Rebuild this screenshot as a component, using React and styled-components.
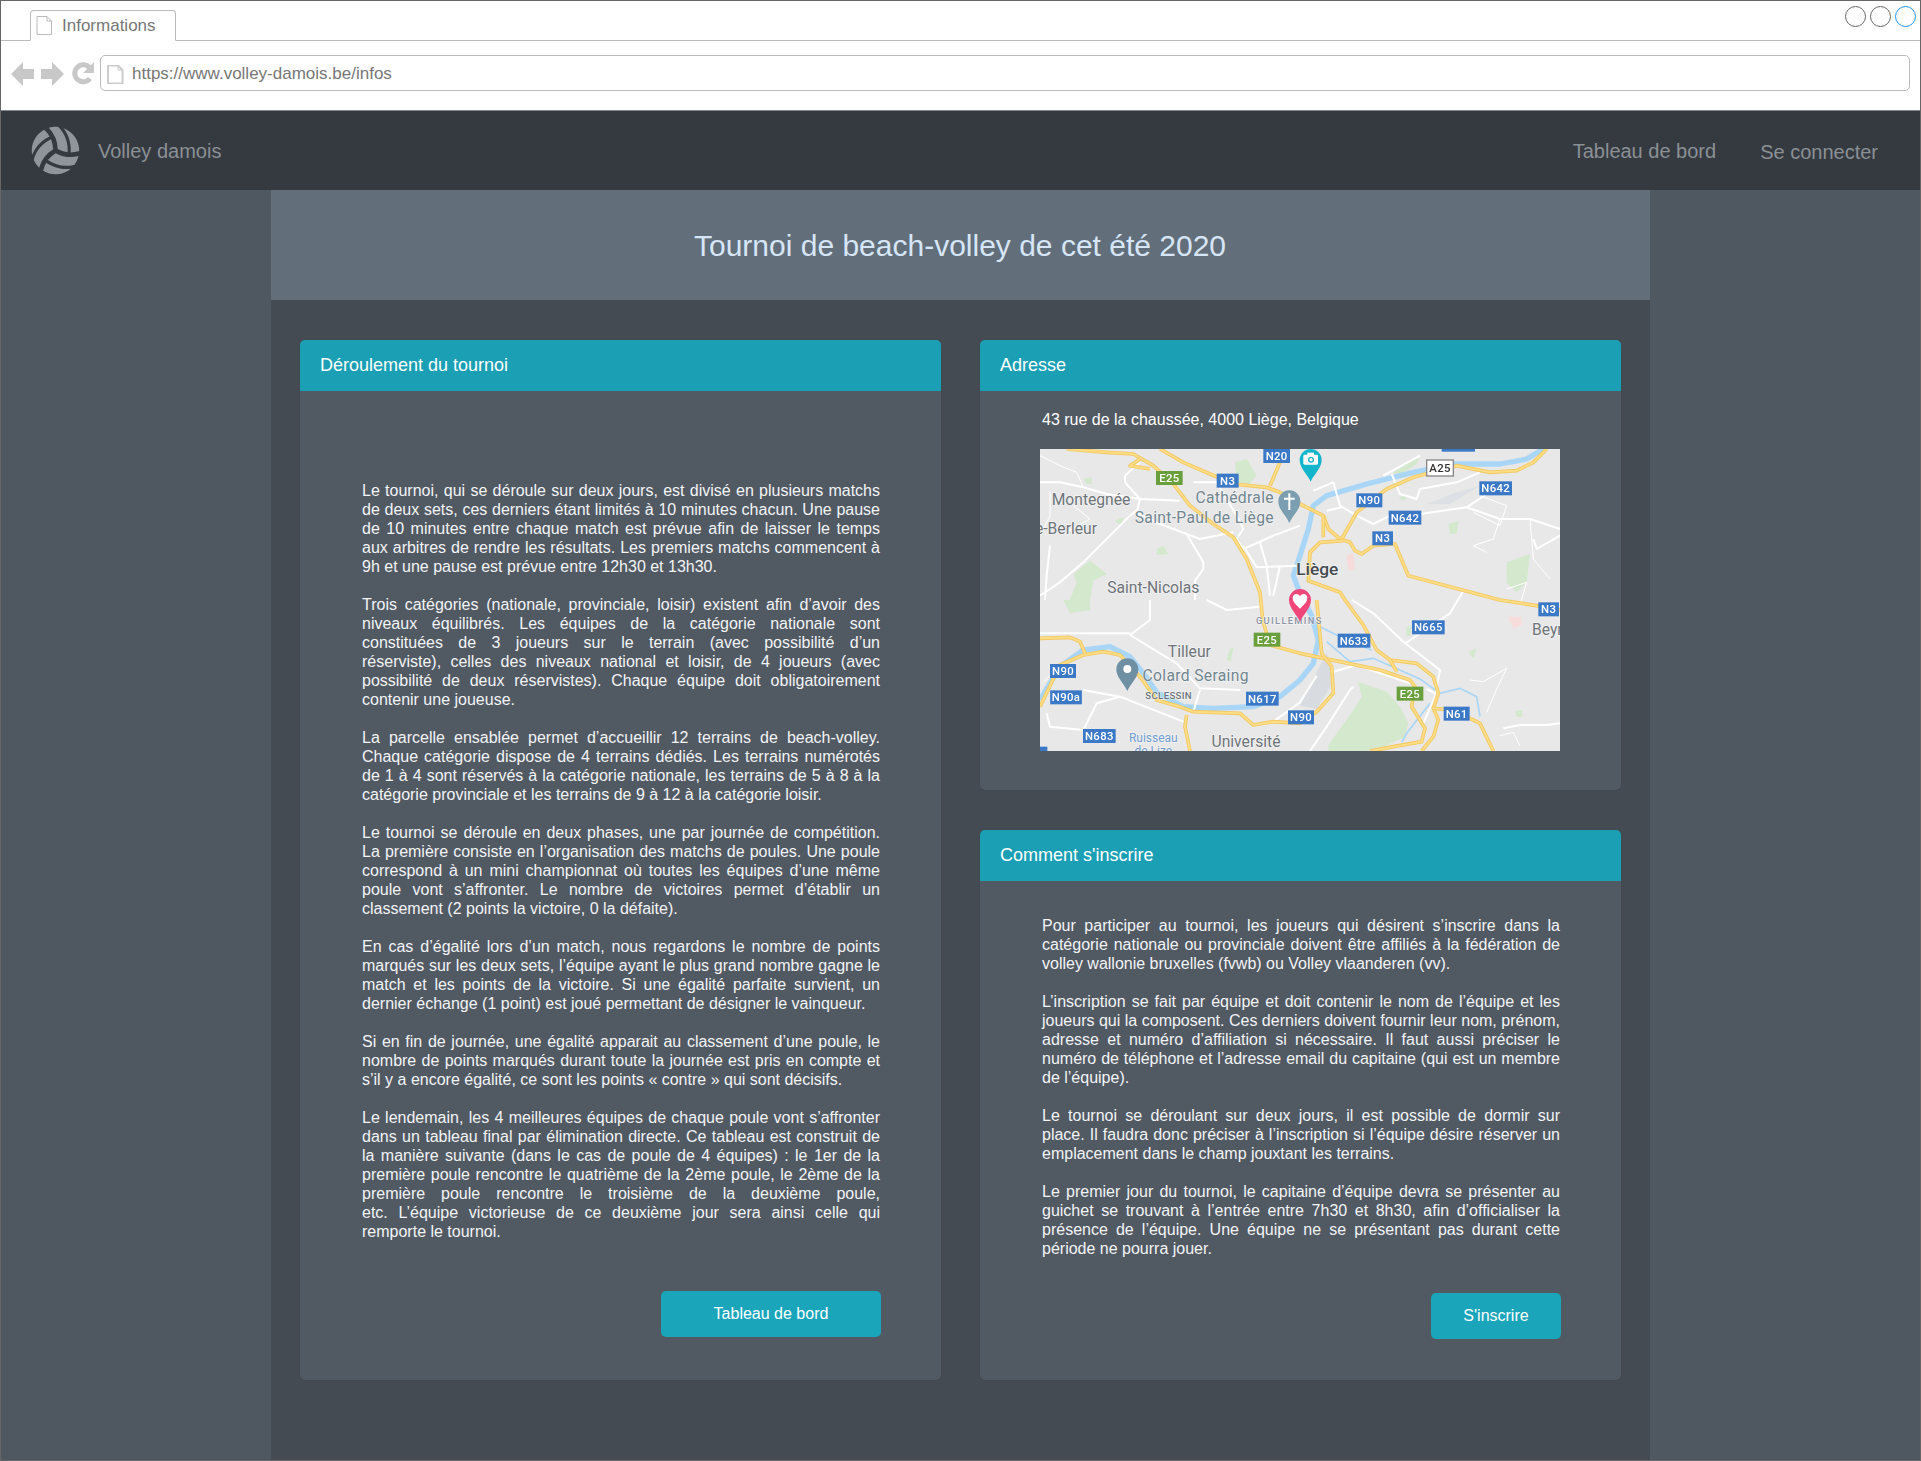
import styled, { createGlobalStyle } from "styled-components"
import { FaVolleyballBall } from "react-icons/fa"

const GlobalStyle = createGlobalStyle`
    * { box-sizing: border-box; }
    body {
        margin: 0;
        font-family: "Liberation Sans", Arial, sans-serif;
        background: #4f5761;
    }
`

const Frame = styled.div`
    width: 1921px;
    height: 1461px;
    border: 1px solid #666;
    overflow: hidden;
    display: flex;
    flex-direction: column;
`

const BrowserBar = styled.header`
    height: 110px;
    background: #fff;
    border-bottom: 1px solid #888;
    display: flex;
    flex-direction: column;
`

const TabRow = styled.div`
    height: 40px;
    border-bottom: 1px solid #bbb;
    padding: 9px 4px 0 29px;
    display: flex;
    justify-content: space-between;
`

const Tab = styled.div`
    width: 146px;
    height: 31px;
    border: 1px solid #bbb;
    border-bottom: 1px solid #fff;
    border-radius: 4px 4px 0 0;
    background: #fff;
    padding-left: 4px;
    display: flex;
    align-items: center;
    gap: 9px;
    color: #777;
    font-size: 17px;
`

const WindowDots = styled.div`
    display: flex;
    gap: 4px;
    margin-top: -4px;
`

const Dot = styled.span`
    width: 21px;
    height: 21px;
    border-radius: 50%;
    border: 1px solid ${(p) => p.$color};
`

const AddressRow = styled.div`
    flex: 1;
    padding: 14px 10px 0 10px;
    display: flex;
    align-items: flex-start;
    gap: 6px;
`

const NavIcons = styled.div`
    display: flex;
    gap: 7px;
    margin-top: 6px;
`

const AddressBox = styled.div`
    flex: 1;
    height: 36px;
    border: 1px solid #bbb;
    border-radius: 5px;
    padding: 2px 0 0 5px;
    display: flex;
    align-items: center;
    gap: 8px;
    color: #777;
    font-size: 17px;
`

const NavBar = styled.nav`
    height: 79px;
    background: #343a40;
    padding: 0 42px 0 30px;
    display: flex;
    align-items: center;
    color: #8b9095;
    font-size: 20px;
`

const Brand = styled.div`
    display: flex;
    align-items: center;
    gap: 18px;
    flex: 1;
    svg { color: #8f959a; }
`

const NavLinks = styled.div`
    display: flex;
    gap: 44px;
`

const NavText = styled.span`
    padding-top: ${(p) => p.$drop}px;
`

const Page = styled.main`
    flex: 1;
    width: 1379px;
    margin-left: 270px;
    background: #444b53;
`

const Banner = styled.div`
    height: 110px;
    padding-top: 2px;
    background: #636e7b;
    display: flex;
    align-items: center;
    justify-content: center;
`

const Title = styled.h1`
    margin: 0 1px 0 0;
    font-size: 30px;
    font-weight: 400;
    color: #d6e6f6;
`

const Columns = styled.div`
    display: grid;
    grid-template-columns: 641px 641px;
    column-gap: 39px;
    padding: 40px 28px 0 29px;
`

const Stack = styled.div`
    display: flex;
    flex-direction: column;
    gap: 40px;
`

const Card = styled.section`
    height: ${(p) => p.$height}px;
    background: #515963;
    border-radius: 5px;
    box-shadow: 0 0 1px #3c4249;
    display: flex;
    flex-direction: column;
`

const CardHeader = styled.h2`
    margin: 0;
    height: 51px;
    padding-left: 20px;
    background: #1a9fb4;
    border-radius: 5px 5px 0 0;
    display: flex;
    align-items: center;
    color: #fff;
    font-size: 18px;
    font-weight: 400;
`

const CardBody = styled.div`
    flex: 1;
    padding: ${(p) => p.$top}px 61px 0 62px;
    color: #f2f4f6;
    font-size: 16px;
    line-height: 19px;
    display: flex;
    flex-direction: column;
`

const Paragraph = styled.p`
    margin: 0 0 19px;
    text-align: justify;
`

const AddressText = styled.p`
    margin: 0 0 20px;
    color: #fff;
`

const ButtonRow = styled.div`
    display: flex;
    justify-content: flex-end;
    margin: ${(p) => p.$top}px -1px 0 0;
`

const ActionButton = styled.button`
    width: ${(p) => p.$width}px;
    height: 46px;
    border: none;
    border-radius: 5px;
    background: #1aa5ba;
    color: #fff;
    font-family: inherit;
    font-size: 16px;
`

const MapFrame = styled.svg`
    display: block;
    width: 520px;
    height: 302px;
    margin-left: -2px;
    background: #e8e8e8;
`

const MapArt = styled.g`
    filter: blur(0.35px);
`

const MapLabel = styled.text`
    font-family: Roboto, "Liberation Sans", sans-serif;
    font-size: ${(p) => p.$size || 47}px;
    font-weight: ${(p) => p.$weight || 400};
    letter-spacing: ${(p) => p.$spacing || 0}px;
    fill: ${(p) => p.$color || "#6d7378"};
    text-anchor: middle;
    paint-order: stroke;
    stroke: rgba(255, 255, 255, 0.55);
    stroke-width: 4px;
`

const BadgeLabel = styled.text`
    font-family: Roboto, "Liberation Sans", sans-serif;
    font-size: 34px;
    font-weight: 500;
    letter-spacing: 1px;
    fill: ${(p) => (p.$light ? "#333" : "#fff")};
    text-anchor: middle;
`

const PageIcon = ({ stroke, fill, strokeWidth = 1 }) => (
    <svg width="18" height="19" viewBox="0 0 18 19">
        <path d="M2 .5H12L16.5 5V18.5H2Z" fill={fill} stroke={stroke} strokeWidth={strokeWidth} />
        <path d="M12 .5V5H16.5" fill="none" stroke={stroke} />
    </svg>
)

const BrowserArrows = () => (
    <svg width="54" height="26" viewBox="0 0 54 26" fill="#c8c8c8">
        <path d="M0 13 12 1V8H23V18H12V25Z" />
        <path d="M53 13 41 1V8H30V18H41V25Z" />
    </svg>
)

const ReloadIcon = () => (
    <svg width="22" height="24" viewBox="0 0 22 24">
        <path d="M17.5 6.5A8.5 8.5 0 1 0 18 17.5" fill="none" stroke="#c8c8c8" strokeWidth="5" />
        <path d="M22 1V12H11Z" fill="#c8c8c8" />
    </svg>
)

// all map coordinates are in 3x pixels of the 520x302 map
const yellowRoads = [
    "M80 0 200 10 280 15 340 50 400 105 450 170 520 225 580 265 620 330 660 430 668 513 690 588 780 613 900 638 1020 663 1110 693 1125 713 1115 773 1155 838 1145 878 1060 893 990 906",
    "M360 0 430 40 510 75 580 105 680 115 720 130 780 165 850 200 865 240 900 270 930 280 945 305 965 315 1000 290 1065 285 1105 380 1380 453 1510 473 1560 483",
    "M720 40 690 110",
    "M905 270 950 190 1040 120 1120 85 1250 50 1350 70 1430 65 1480 40 1520 0",
    "M910 275 840 280 810 310 805 395 900 430 915 453 970 528 1010 603 1050 633 1130 643 1180 683 1195 733 1180 778 1195 813 1180 863 1145 906",
    "M1180 778 1240 783 1320 823 1360 906",
    "M1050 633 1070 668",
    "M830 453 845 613 875 653 880 733 830 788 780 823 700 818 640 828 600 793 460 788 420 773 350 753 300 683 240 618 190 608 130 618 60 648 0 773",
    "M0 568 90 565 120 578 135 613",
    "M440 798 435 833 450 906",
    "M850 200 850 265",
    "M300 30 270 50 330 60",
]

const whiteRoads = [
    "M0 100 60 100 130 115 200 135 300 150 420 155",
    "M300 40 255 80 255 100 300 150 290 190 360 225 440 255 480 270 580 250",
    "M130 340 180 290 270 200 290 185",
    "M130 340 60 400 0 440",
    "M30 290 20 380 15 453",
    "M440 255 490 340 490 360 465 395 465 453",
    "M460 100 530 100 590 200 610 240 590 270 610 300 700 260 780 230",
    "M610 290 650 355 770 350",
    "M660 280 680 350 690 440",
    "M820 125 880 100 900 170 950 200 1000 225 1050 200",
    "M860 185 905 175",
    "M1055 75 1080 135 1130 150 1140 120 1250 100 1320 70",
    "M1030 80 1140 20",
    "M1140 195 1280 175 1340 135",
    "M1280 175 1380 210 1470 210 1560 240",
    "M1270 425 1230 493 1095 583",
    "M935 453 1000 493 1090 578 1200 663 1185 743 1150 823",
    "M880 668 950 648 1110 703",
    "M940 713 930 723 860 833 810 906",
    "M1390 838 1440 828 1520 828 1560 823",
    "M330 453 330 513 270 558 410 643 480 718 600 723",
    "M130 723 240 743 430 818",
    "M20 793 30 833 130 843 170 763 240 743",
    "M500 453 560 483 660 473",
    "M0 553 125 553 270 553",
    "M460 788 480 723",
    "M1185 733 1160 720",
    "M700 818 780 760 830 680",
    "M720 350 700 440",
    "M1480 270 1490 300 1560 260",
]

const thinWhiteRoads = [
    "M0 20 60 50 110 70 130 115",
    "M30 130 30 200 0 260",
    "M100 170 150 210 60 260",
    "M1300 190 1380 230 1400 170 1320 140",
    "M1380 210 1360 270 1300 290 1340 310",
    "M1470 210 1480 330 1530 390",
    "M1290 693 1330 698 1400 658 1370 720 1340 790",
    "M1380 860 1420 850 1440 890",
    "M1400 420 1460 400 1440 470",
    "M10 700 50 660",
]

const minorRivers = [
    "M840 533 930 578 995 603",
    "M860 578 930 638 1000 628 1140 690 1200 733 1260 718 1310 743 1320 803",
    "M1170 763 1100 853 1085 880",
]

const greenPatches = [
    "M100 375 150 335 200 375 160 395 150 453 90 453 110 400Z",
    "M70 453 150 453 150 483 90 493Z",
    "M955 698 1040 728 1080 773 1105 823 1095 863 1030 893 980 906 865 906 865 888 940 783 965 743Z",
    "M585 40 620 30 650 80 620 115 590 100Z",
    "M350 300 370 290 385 315 350 318Z",
    "M225 215 250 205 245 230Z",
    "M1400 340 1470 315 1460 400 1430 430 1400 400Z",
    "M1225 225 1255 215 1250 255 1230 255Z",
    "M1075 145 1105 140 1090 155Z",
    "M1060 70 1140 20 1130 45 1070 85Z",
    "M1285 608 1310 598 1300 628Z",
    "M1425 788 1445 783 1448 803 1430 803Z",
    "M130 90 155 85 155 105 140 105Z",
    "M1100 535 1115 530 1112 560 1100 560Z",
    "M570 600 580 595 572 640 560 630Z",
]

const badges = [
    [710, 21, 80, 42, "N20"],
    [388, 87, 80, 42, "E25", "green"],
    [563, 95, 66, 42, "N3"],
    [1200, 57, 80, 48, "A25", "white"],
    [1367, 118, 98, 42, "N642"],
    [988, 154, 78, 42, "N90"],
    [1095, 206, 98, 42, "N642"],
    [1028, 268, 62, 42, "N3"],
    [1526, 481, 62, 42, "N3"],
    [1165, 535, 98, 42, "N665"],
    [942, 575, 98, 42, "N633"],
    [681, 572, 80, 42, "E25", "green"],
    [69, 666, 78, 42, "N90"],
    [78, 745, 95, 42, "N90a"],
    [667, 749, 98, 42, "N617"],
    [1110, 734, 80, 42, "E25", "green"],
    [783, 805, 78, 42, "N90"],
    [1250, 794, 78, 42, "N61"],
    [178, 861, 98, 42, "N683"],
]

const labels = [
    { x: 153, y: 169, t: "Montegnée" },
    { x: 584, y: 163, t: "Cathédrale", color: "#71858f", spacing: 1 },
    { x: 493, y: 221, t: "Saint-Paul de Liège", color: "#71858f", spacing: 1 },
    { x: 78, y: 256, t: "e-Berleur" },
    { x: 832, y: 378, t: "Liège", size: 52, weight: 500, color: "#444a4f" },
    { x: 340, y: 433, t: "Saint-Nicolas" },
    { x: 748, y: 525, t: "GUILLEMINS", size: 28, weight: 500, color: "#8c93a3", spacing: 4 },
    { x: 1522, y: 559, t: "Beyr" },
    { x: 448, y: 624, t: "Tilleur" },
    { x: 467, y: 695, t: "Colard Seraing", color: "#71858f", spacing: 1 },
    { x: 386, y: 750, t: "SCLESSIN", size: 29, weight: 500, spacing: 1, color: "#6b7480" },
    { x: 340, y: 880, t: "Ruisseau", size: 36, color: "#6f9bd1" },
    { x: 340, y: 917, t: "de Lize", size: 36, color: "#6f9bd1" },
    { x: 618, y: 895, t: "Université" },
]

const Pin = ({ x, y, color, children }) => (
    <g transform={`translate(${x} ${y})`}>
        <path d="M0 65C-10 42-33 25-33 0A33 33 0 1 1 33 0C33 25 10 42 0 65Z" fill={color} />
        {children}
    </g>
)

const LiegeMap = () => (
    <MapFrame viewBox="0 0 1560 906">
        <MapArt>
            {greenPatches.map((d) => (
                <path key={d} d={d} fill="#d3e8cd" />
            ))}
            <path d="M780 770 860 610 880 700 830 780Z" fill="#d8dce0" />
            <path d="M1160 165 1250 130 1320 110 1230 165Z" fill="#dde1e6" />
            <path d="M920 320 940 310 945 360 925 365Z" fill="#f7dcdc" />
            <path d="M1405 503 1445 503 1445 528 1420 538Z" fill="#f7dcdc" />
            {minorRivers.map((d) => (
                <path key={d} d={d} fill="none" stroke="#a9d6f7" strokeWidth="5" />
            ))}
            <path
                d="M0 753 60 653 130 603 210 593 270 623 310 673 350 730 430 773 520 778 640 773 720 743 780 693 820 643 835 573 815 500 775 420 760 380 780 320 805 240 820 170 860 140 980 105 1120 70 1240 45 1380 45 1460 30 1510 0"
                fill="none"
                stroke="#a9d6f7"
                strokeWidth="16"
                strokeLinejoin="round"
            />
            {thinWhiteRoads.map((d) => (
                <path key={d} d={d} fill="none" stroke="#fff" strokeWidth="3" strokeLinejoin="round" />
            ))}
            {whiteRoads.map((d) => (
                <path key={d} d={d} fill="none" stroke="#fff" strokeWidth="6" strokeLinejoin="round" />
            ))}
            {yellowRoads.map((d) => (
                <g key={d} fill="none" strokeLinejoin="round">
                    <path d={d} stroke="#f3c75f" strokeWidth="11" />
                    <path d={d} stroke="#fcdc85" strokeWidth="6" />
                </g>
            ))}
            <rect x="1205" y="0" width="100" height="8" fill="#3b78c6" />
            <rect x="0" y="893" width="22" height="13" fill="#3b78c6" />
            {badges.map(([x, y, w, h, t, kind]) => (
                <g key={`${t}${x}`}>
                    <rect
                        x={x - w / 2}
                        y={y - h / 2}
                        width={w}
                        height={h}
                        fill={kind === "green" ? "#6a9f3e" : kind === "white" ? "#fff" : "#3b78c6"}
                        stroke={kind === "white" ? "#888" : "none"}
                        strokeWidth="4"
                    />
                    <BadgeLabel x={x} y={y + 12} $light={kind === "white"}>
                        {t}
                    </BadgeLabel>
                </g>
            ))}
        </MapArt>
        {labels.map((l) => (
            <MapLabel key={l.t} x={l.x} y={l.y} $size={l.size} $weight={l.weight} $color={l.color} $spacing={l.spacing}>
                {l.t}
            </MapLabel>
        ))}
        <Pin x={812} y={33} color="#12b5c9">
            <rect x="-22" y="-16" width="44" height="30" rx="4" fill="#fff" />
            <rect x="-10" y="-22" width="20" height="8" fill="#fff" />
            <circle cx="1" cy="-1" r="9" fill="#12b5c9" />
            <circle cx="1" cy="-1" r="5" fill="#fff" />
        </Pin>
        <Pin x={748} y={157} color="#7b9eb0">
            <path d="M-3 -24H3V-11H16V-5H3V26H-3V-5H-16V-11H-3Z" fill="#fff" />
        </Pin>
        <Pin x={262} y={661} color="#6f8fa3">
            <circle cx="0" cy="-1" r="12" fill="#fff" />
        </Pin>
        <Pin x={780} y={453} color="#f0477a">
            <path d="M0 26C-12 14-22 6-22 -6-22 -20-6 -22 0 -11 6 -22 22 -20 22 -6 22 6 12 14 0 26Z" fill="#fff" />
        </Pin>
    </MapFrame>
)

export default function App() {
    return (
        <Frame>
            <GlobalStyle />
            <BrowserBar>
                <TabRow>
                    <Tab>
                        <PageIcon stroke="#bbb" fill="#fff" />
                        Informations
                    </Tab>
                    <WindowDots>
                        <Dot $color="#666" />
                        <Dot $color="#666" />
                        <Dot $color="#2196f3" />
                    </WindowDots>
                </TabRow>
                <AddressRow>
                    <NavIcons>
                        <BrowserArrows />
                        <ReloadIcon />
                    </NavIcons>
                    <AddressBox>
                        <PageIcon stroke="#ccc" fill="#fff" strokeWidth={2} />
                        https://www.volley-damois.be/infos
                    </AddressBox>
                </AddressRow>
            </BrowserBar>
            <NavBar>
                <Brand>
                    <FaVolleyballBall size={49} />
                    <NavText $drop={2}>Volley damois</NavText>
                </Brand>
                <NavLinks>
                    <NavText $drop={3}>Tableau de bord</NavText>
                    <NavText $drop={4}>Se connecter</NavText>
                </NavLinks>
            </NavBar>
            <Page>
                <Banner>
                    <Title>Tournoi de beach-volley de cet été 2020</Title>
                </Banner>
                <Columns>
                    <Card $height={1040}>
                        <CardHeader>Déroulement du tournoi</CardHeader>
                        <CardBody $top={90}>
                            <Paragraph>Le tournoi, qui se déroule sur deux jours, est divisé en plusieurs matchs de deux sets, ces derniers étant limités à 10 minutes chacun. Une pause de 10 minutes entre chaque match est prévue afin de laisser le temps aux arbitres de rendre les résultats. Les premiers matchs commencent à 9h et une pause est prévue entre 12h30 et 13h30.</Paragraph>
                            <Paragraph>Trois catégories (nationale, provinciale, loisir) existent afin d’avoir des niveaux équilibrés. Les équipes de la catégorie nationale sont constituées de 3 joueurs sur le terrain (avec possibilité d’un réserviste),&nbsp;celles des niveaux national et loisir, de 4 joueurs (avec possibilité de deux réservistes). Chaque équipe doit obligatoirement contenir une joueuse.</Paragraph>
                            <Paragraph>La parcelle ensablée permet d’accueillir 12 terrains de beach-volley. Chaque catégorie dispose de 4 terrains dédiés. Les terrains numérotés de 1 à 4 sont réservés à la catégorie nationale, les terrains de 5 à 8 à la catégorie provinciale et les terrains de 9 à 12 à la catégorie loisir.</Paragraph>
                            <Paragraph>Le tournoi se déroule en deux phases, une par journée de compétition. La première consiste en l’organisation des matchs de poules. Une poule correspond à un mini championnat où toutes les équipes d’une même poule vont s’affronter. Le nombre de victoires permet d’établir un classement (2 points la victoire, 0 la défaite).</Paragraph>
                            <Paragraph>En cas d’égalité lors d’un match, nous regardons le nombre de points marqués sur les deux sets, l’équipe ayant le plus grand nombre gagne le match et les points de la victoire. Si une égalité parfaite survient, un dernier échange (1 point) est joué permettant de désigner le vainqueur.</Paragraph>
                            <Paragraph>Si en fin de journée, une égalité apparait au classement d’une poule, le nombre de points marqués durant toute la journée est pris en compte et s’il y a encore égalité, ce sont les points « contre » qui sont décisifs.</Paragraph>
                            <Paragraph>Le lendemain, les 4 meilleures équipes de chaque poule vont s’affronter dans un tableau final par élimination directe. Ce tableau est construit de la manière suivante (dans le cas de poule de 4 équipes) : le 1er de la première poule rencontre le quatrième de la 2ème poule, le 2ème de la première poule rencontre le troisième de la deuxième poule, etc.&nbsp;L’équipe victorieuse de ce deuxième jour sera ainsi celle qui remporte le tournoi.</Paragraph>
                            <ButtonRow $top={31}>
                                <ActionButton $width={220}>Tableau de bord</ActionButton>
                            </ButtonRow>
                        </CardBody>
                    </Card>
                    <Stack>
                        <Card $height={450}>
                            <CardHeader>Adresse</CardHeader>
                            <CardBody $top={19}>
                                <AddressText>43 rue de la chaussée, 4000 Liège, Belgique</AddressText>
                                <LiegeMap />
                            </CardBody>
                        </Card>
                        <Card $height={550}>
                            <CardHeader>Comment s'inscrire</CardHeader>
                            <CardBody $top={35}>
                                <Paragraph>Pour participer au tournoi, les joueurs qui désirent s’inscrire dans la catégorie nationale ou provinciale doivent être affiliés à la fédération de volley wallonie bruxelles (fvwb) ou Volley vlaanderen (vv).</Paragraph>
                                <Paragraph>L’inscription se fait par équipe et doit contenir le nom de l’équipe et les joueurs qui la composent. Ces derniers doivent fournir leur nom, prénom, adresse et numéro d’affiliation si nécessaire. Il faut aussi préciser le numéro de téléphone et l’adresse email du capitaine (qui est un membre de l’équipe).</Paragraph>
                                <Paragraph>Le tournoi se déroulant sur deux jours, il est possible de dormir sur place. Il faudra donc préciser à l’inscription si l’équipe désire réserver un emplacement dans le champ jouxtant les terrains.</Paragraph>
                                <Paragraph>Le premier jour du tournoi, le capitaine d’équipe devra se présenter au guichet se trouvant à l’entrée entre 7h30 et 8h30, afin d’officialiser la présence de l’équipe. Une équipe ne se présentant pas durant cette période ne pourra jouer.</Paragraph>
                                <ButtonRow $top={16}>
                                    <ActionButton $width={130}>S'inscrire</ActionButton>
                                </ButtonRow>
                            </CardBody>
                        </Card>
                    </Stack>
                </Columns>
            </Page>
        </Frame>
    )
}
